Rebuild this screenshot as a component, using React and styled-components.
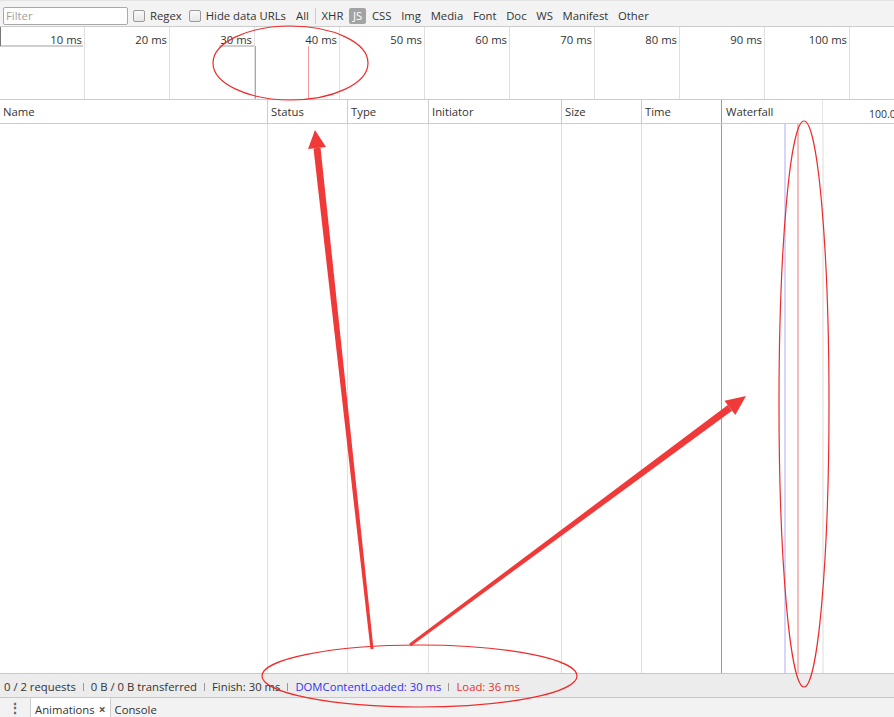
import styled, { createGlobalStyle } from 'styled-components'

const GlobalStyle = createGlobalStyle`
    html, body {
        margin: 0;
        padding: 0;
        overflow: hidden;
        background: #fff;
    }
    body {
        font-family: 'Segoe UI', 'Open Sans', 'Liberation Sans', sans-serif;
        font-size: 11.3px;
        color: #333;
    }
`

const filters = ['XHR', 'JS', 'CSS', 'Img', 'Media', 'Font', 'Doc', 'WS', 'Manifest', 'Other']
const ticks = [10, 20, 30, 40, 50, 60, 70, 80, 90, 100, null]
const columns = [
    { name: 'Name', width: 267 },
    { name: 'Status', width: 80 },
    { name: 'Type', width: 81 },
    { name: 'Initiator', width: 133 },
    { name: 'Size', width: 80 },
    { name: 'Time', width: 80 },
]

const App = () => {
    return (
        <Page>
            <GlobalStyle />
            <Toolbar>
                <FilterInput placeholder='Filter' />
                <CheckLabel>
                    <Box />
                    Regex
                </CheckLabel>
                <CheckLabel>
                    <Box />
                    Hide data URLs
                </CheckLabel>
                <FilterItem>All</FilterItem>
                <ToolbarDivider />
                {filters.map(f => (
                    <FilterItem key={f} active={f === 'JS'}>
                        {f}
                    </FilterItem>
                ))}
            </Toolbar>

            <Overview>
                {ticks.map((t, i) => (
                    <Tick key={i}>{t && <TickLabel>{t} ms</TickLabel>}</Tick>
                ))}
                <LabelBar style={{ left: 0, width: 83 }} />
                <LabelBar style={{ left: 219, width: 35 }} />
                <EdgeMark />
                <Marker color='#a0a0f0' style={{ left: 255 }} />
                <Marker color='#f59a9a' style={{ left: 308 }} />
            </Overview>

            <Grid>
                <HeaderRow>
                    {columns.map(c => (
                        <HeaderCell key={c.name} w={c.width}>
                            {c.name}
                        </HeaderCell>
                    ))}
                    <WaterfallHead>
                        <span>Waterfall</span>
                        <WaterfallScale>100.00 ms</WaterfallScale>
                    </WaterfallHead>
                </HeaderRow>
                <BodyRow>
                    {columns.map(c => (
                        <BodyCol key={c.name} w={c.width} />
                    ))}
                    <WaterfallCol>
                        <BodyMarker color='#d6d6fb' style={{ left: 62 }} />
                        <BodyMarker color='#f4bcbc' style={{ left: 75 }} />
                        <BodyMarker color='#eeeeee' style={{ left: 100 }} />
                    </WaterfallCol>
                </BodyRow>
            </Grid>

            <StatusBar>
                <span>0 / 2 requests</span>
                <Sep />
                <span>0 B / 0 B transferred</span>
                <Sep />
                <span>Finish: 30 ms</span>
                <Sep />
                <StatusText color='#3333ee'>DOMContentLoaded: 30 ms</StatusText>
                <Sep />
                <StatusText color='#e63232'>Load: 36 ms</StatusText>
            </StatusBar>

            <Drawer>
                <Kebab>⋮</Kebab>
                <Tab selected>
                    Animations <Close>×</Close>
                </Tab>
                <Tab>Console</Tab>
            </Drawer>

            <Annotations width='894' height='717' viewBox='0 0 894 717'>
                <g fill='none' stroke='#ee2b2b' strokeWidth='1.2'>
                    <ellipse cx='290.5' cy='63' rx='77.5' ry='37' />
                    <ellipse cx='419.5' cy='676' rx='157.5' ry='31' />
                    <ellipse cx='804' cy='404' rx='25' ry='283' />
                </g>
                <g fill='#f03a3a'>
                    <polygon points='320.5,147.6 313.5,148.4 370.5,649.2 373.5,648.8' />
                    <polygon points='315,130 326,147 308,149' />
                    <polygon points='732,410.7 727.8,405.1 409.1,643.8 410.9,646.2' />
                    <polygon points='746,396 735.3,415.1 724.5,400.7' />
                </g>
            </Annotations>
        </Page>
    )
}

const Page = styled.div`
    position: relative;
    width: 894px;
    height: 717px;
    display: flex;
    flex-direction: column;
    overflow: hidden;
`

const Toolbar = styled.div`
    height: 21px;
    flex: none;
    display: flex;
    align-items: center;
    background: #f3f3f3;
    border-top: 1px solid #e4e4e4;
    border-bottom: 1px solid #cccccc;
    box-sizing: content-box;
    padding: 4px 0 0 3px;
`

const FilterInput = styled.input`
    width: 119px;
    height: 16px;
    padding: 0 2px;
    margin: 0 5px 0 0;
    border: 1px solid #a9a9a9;
    border-radius: 2px;
    background: #fff;
    font-family: inherit;
    font-size: 11.3px;
    outline: none;

    &::placeholder {
        color: #a0a0a0;
    }
`

const CheckLabel = styled.label`
    display: flex;
    align-items: center;
    margin-right: 7px;
    color: #333;
`

const Box = styled.span`
    width: 10px;
    height: 10px;
    margin-right: 5px;
    border: 1px solid #9a9a9a;
    border-radius: 2px;
    background: linear-gradient(#fafafa, #e6e6e6);
`

const FilterItem = styled.span`
    padding: 1px 4px;
    margin-right: 1.7px;
    border-radius: 2px;
    line-height: 14px;
    background: ${p => (p.active ? '#a3a3a3' : 'transparent')};
    color: ${p => (p.active ? '#fff' : '#333')};

    &:first-of-type {
        padding: 1px 3px;
    }
`

const ToolbarDivider = styled.span`
    width: 1px;
    height: 16px;
    background: #cccccc;
    margin: 0 2px 0 1px;
`

const Overview = styled.div`
    position: relative;
    height: 72px;
    flex: none;
    display: flex;
    background: #fff;
`

const Tick = styled.div`
    width: 84px;
    flex: none;
    border-right: 1px solid #e0e0e0;
    display: flex;
    justify-content: flex-end;
`

const TickLabel = styled.span`
    padding: 5px 2px 0 0;
    color: #333;
`

const LabelBar = styled.div`
    position: absolute;
    top: 18px;
    height: 2px;
    background: #cfcfcf;
`

const EdgeMark = styled.div`
    position: absolute;
    top: 0;
    left: 0;
    width: 1px;
    height: 19px;
    background: #777;
`

const Marker = styled.div`
    position: absolute;
    top: 19px;
    bottom: 0;
    width: 1px;
    background: ${p => p.color};
`

const Grid = styled.div`
    flex: 1;
    display: flex;
    flex-direction: column;
    min-height: 0;
`

const HeaderRow = styled.div`
    height: 23px;
    flex: none;
    display: flex;
    border-top: 1px solid #cccccc;
    border-bottom: 1px solid #cccccc;
`

const HeaderCell = styled.div`
    width: ${p => p.w}px;
    flex: none;
    box-sizing: border-box;
    padding-left: 3px;
    display: flex;
    align-items: center;
    border-left: 1px solid #cccccc;

    &:first-child {
        border-left: none;
    }
`

const WaterfallHead = styled.div`
    flex: 1;
    display: flex;
    align-items: center;
    position: relative;
    overflow: hidden;
    white-space: nowrap;
    border-left: 1px solid #999;
    padding-left: 4px;

    &::after {
        content: '';
        position: absolute;
        left: 100px;
        top: 0;
        bottom: 0;
        width: 1px;
        background: #e6e6e6;
    }
`

const WaterfallScale = styled.span`
    position: absolute;
    left: 147px;
    top: 7px;
    font-size: 10.5px;
`

const BodyRow = styled.div`
    flex: 1;
    display: flex;
`

const BodyCol = styled.div`
    width: ${p => p.w}px;
    flex: none;
    box-sizing: border-box;
    border-left: 1px solid #e0e0e0;

    &:first-child {
        border-left: none;
    }
`

const WaterfallCol = styled.div`
    flex: 1;
    position: relative;
    border-left: 1px solid #9a9a9a;
`

const BodyMarker = styled.div`
    position: absolute;
    top: 0;
    bottom: 0;
    width: 2px;
    background: ${p => p.color};
`

const StatusBar = styled.div`
    height: 24px;
    flex: none;
    display: flex;
    align-items: center;
    padding: 2px 0 0 4px;
    box-sizing: border-box;
    background: #ececec;
    border-top: 1px solid #c8c8c8;
    white-space: nowrap;
`

const StatusText = styled.span`
    color: ${p => p.color};
`

const Sep = styled.span`
    width: 1px;
    height: 8px;
    margin: 0 7px;
    background: #999;
`

const Drawer = styled.div`
    height: 19px;
    flex: none;
    display: flex;
    align-items: stretch;
    background: #f2f2f2;
    border-top: 1px solid #c8c8c8;
`

const Kebab = styled.span`
    width: 30px;
    display: flex;
    justify-content: center;
    align-items: center;
    color: #666;
    font-size: 14px;
    font-weight: bold;
`

const Tab = styled.span`
    display: flex;
    align-items: center;
    padding: 3px 4px 0 4px;
    background: ${p => (p.selected ? '#fff' : 'transparent')};
    border-left: ${p => (p.selected ? '1px solid #ccc' : 'none')};
    border-right: ${p => (p.selected ? '1px solid #ccc' : 'none')};
`

const Close = styled.span`
    margin-left: 4px;
    font-size: 12px;
    font-weight: bold;
    color: #555;
`

const Annotations = styled.svg`
    position: absolute;
    left: 0;
    top: 0;
    pointer-events: none;
`

export default App
